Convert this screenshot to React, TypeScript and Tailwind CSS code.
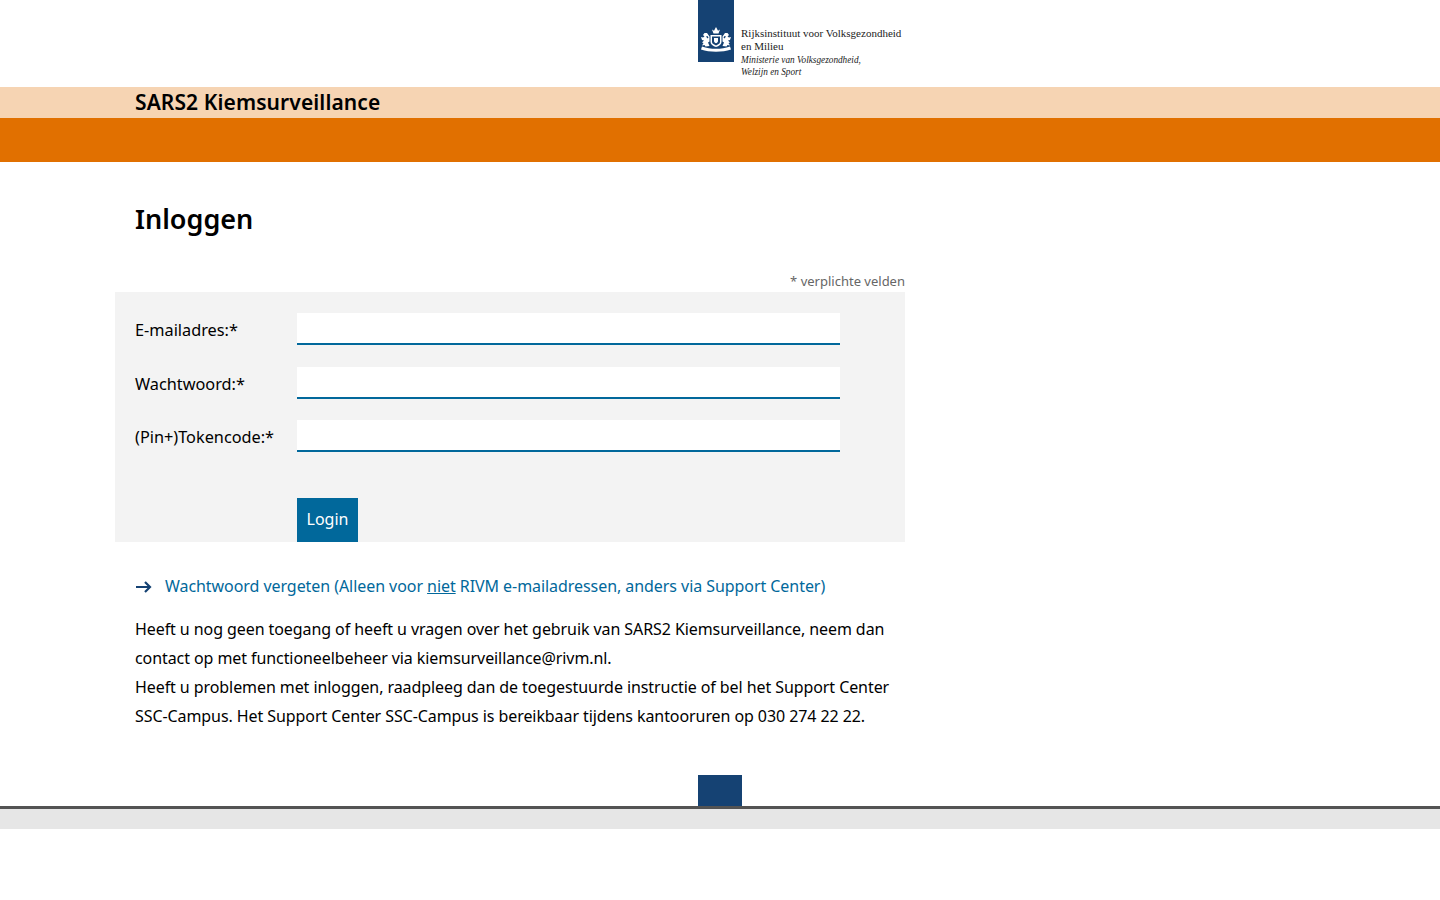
// App.tsx
const Crest = () => (
    <svg viewBox="0 0 32 26" className="w-8 h-[26px]" fill="#fff">
        {/* crown */}
        <path d="M13.500 6.500l-1.500-4 2 1.200L16 0l2 3.700 2-1.200-1.500 4z" />
        {/* shield */}
        <path d="M10.500 8h11v7c0 2.500-2.500 4-5.500 5-3-1-5.500-2.500-5.500-5z" />
        <path d="M12 9.500h8v5.500c0 1.700-2.200 2.700-4 3.400-1.800-.7-4-1.700-4-3.400z" fill="#154273" />
        <path d="M14 11h4v3.200c0 .8-1.200 1.600-2 2-.8-.4-2-1.200-2-2z" />
        {/* lions */}
        <path d="M9.500 19L8 15.500l1.500-1V9.500L7 6H4.500L3 8l1.500 1.500L3 10.500 1 10l1 3 2 .5-2 2 1.500.5L2 18.500l2.500-.5 1 1.500z" />
        <path d="M22.500 19l1.500-3.500-1.500-1V9.500L25 6h2.500L29 8l-1.500 1.500 1.500 1 2-.5-1 3-2 .5 2 2-1.500.5 1.500 2.500-2.500-.5-1 1.500z" />
        <path d="M6 9.500l1.500-.5 1 1.500-1 1zM26 9.500l-1.500-.5-1 1.500 1 1z" fill="#154273" />
        {/* ribbon */}
        <path d="M2 19.500c4.500 1.700 9 2.300 14 2.300s9.500-.6 14-2.300l1 3c-4.500 1.500-9.500 2.200-15 2.200S5.500 24 1 22.500z" />
    </svg>
);

const Field = ({ label }: { label: string }) => (
    <div className="flex items-center h-8">
        <label className="w-[162px] shrink-0 text-[16.300px] leading-8 pt-[2px] text-black whitespace-nowrap">{label}</label>
        <input type="text" className="w-[543px] h-8 bg-white border-b-2 border-[#01689b] outline-none" />
    </div>
);

const App = () => {
    return (
        <div className="min-h-[900px] bg-white font-['Noto_Sans','Open_Sans',sans-serif] text-black">
            <header className="h-[87px] flex pl-[698px]">
                <div className="w-[36px] h-[62px] bg-[#154273] flex items-end justify-center pb-[9px] shrink-0">
                    <Crest />
                </div>
                <div className="ml-[7px] pt-[27px] font-['Liberation_Serif',serif] text-[#222] text-[11px] leading-[12.500px] whitespace-nowrap">
                    <div>Rijksinstituut voor Volksgezondheid</div>
                    <div>en Milieu</div>
                    <div className="italic mt-[0.500px] origin-left scale-x-[0.84]">Ministerie van Volksgezondheid,</div>
                    <div className="italic origin-left scale-x-[0.84]">Welzijn en Sport</div>
                </div>
            </header>

            <div className="h-[31px] bg-[#f6d4b3] pl-[135px] text-[21px] leading-[31px] font-semibold tracking-[0.1px]">
                SARS2 Kiemsurveillance
            </div>
            <div className="h-[44px] bg-[#e17000]" />

            <main className="w-[790px] ml-[115px]">
                <h1 className="pl-5 pt-[37px] text-[27px] leading-10 font-semibold">Inloggen</h1>
                <p className="mt-[32px] text-right text-[13px] leading-5 text-[#666]">* verplichte velden</p>

                <form className="bg-[#f3f3f3] h-[250px] pt-[21px] pl-5 mt-[1px]">
                    <div className="flex flex-col gap-[21.500px]">
                        <Field label="E-mailadres:*" />
                        <Field label="Wachtwoord:*" />
                        <Field label="(Pin+)Tokencode:*" />
                    </div>
                    <div className="pl-[162px] mt-[46px]">
                        <button type="button" className="w-[61px] h-11 pb-[2px] bg-[#01689b] text-white text-base">Login</button>
                    </div>
                </form>

                <div className="pl-[21px] mt-[30px] flex items-center text-[#01689b] text-base tracking-[-0.06px] leading-[29px]">
                    <svg viewBox="0 0 16 12" className="w-4 h-3 mr-[13px] shrink-0" fill="none" stroke="#154273" strokeWidth="2.200">
                        <path d="M0 6h14M9 1l5 5-5 5" />
                    </svg>
                    <span className="whitespace-nowrap">Wachtwoord vergeten (Alleen voor <u>niet</u> RIVM e-mailadressen, anders via Support Center)</span>
                </div>

                <p className="pl-5 mt-[14px] text-base tracking-[-0.08px] leading-[29px] whitespace-nowrap">
                    Heeft u nog geen toegang of heeft u vragen over het gebruik van SARS2 Kiemsurveillance, neem dan<br />
                    contact op met functioneelbeheer via kiemsurveillance@rivm.nl.<br />
                    Heeft u problemen met inloggen, raadpleeg dan de toegestuurde instructie of bel het Support Center<br />
                    SSC-Campus. Het Support Center SSC-Campus is bereikbaar tijdens kantooruren op 030 274 22 22.
                </p>
            </main>

            <footer className="mt-[44px]">
                <div className="pl-[698px]"><div className="w-11 h-[31px] bg-[#154273]" /></div>
                <div className="h-[3px] bg-[#535353]" />
                <div className="h-5 bg-[#e6e6e6]" />
            </footer>
        </div>
    );
};

export default App;
